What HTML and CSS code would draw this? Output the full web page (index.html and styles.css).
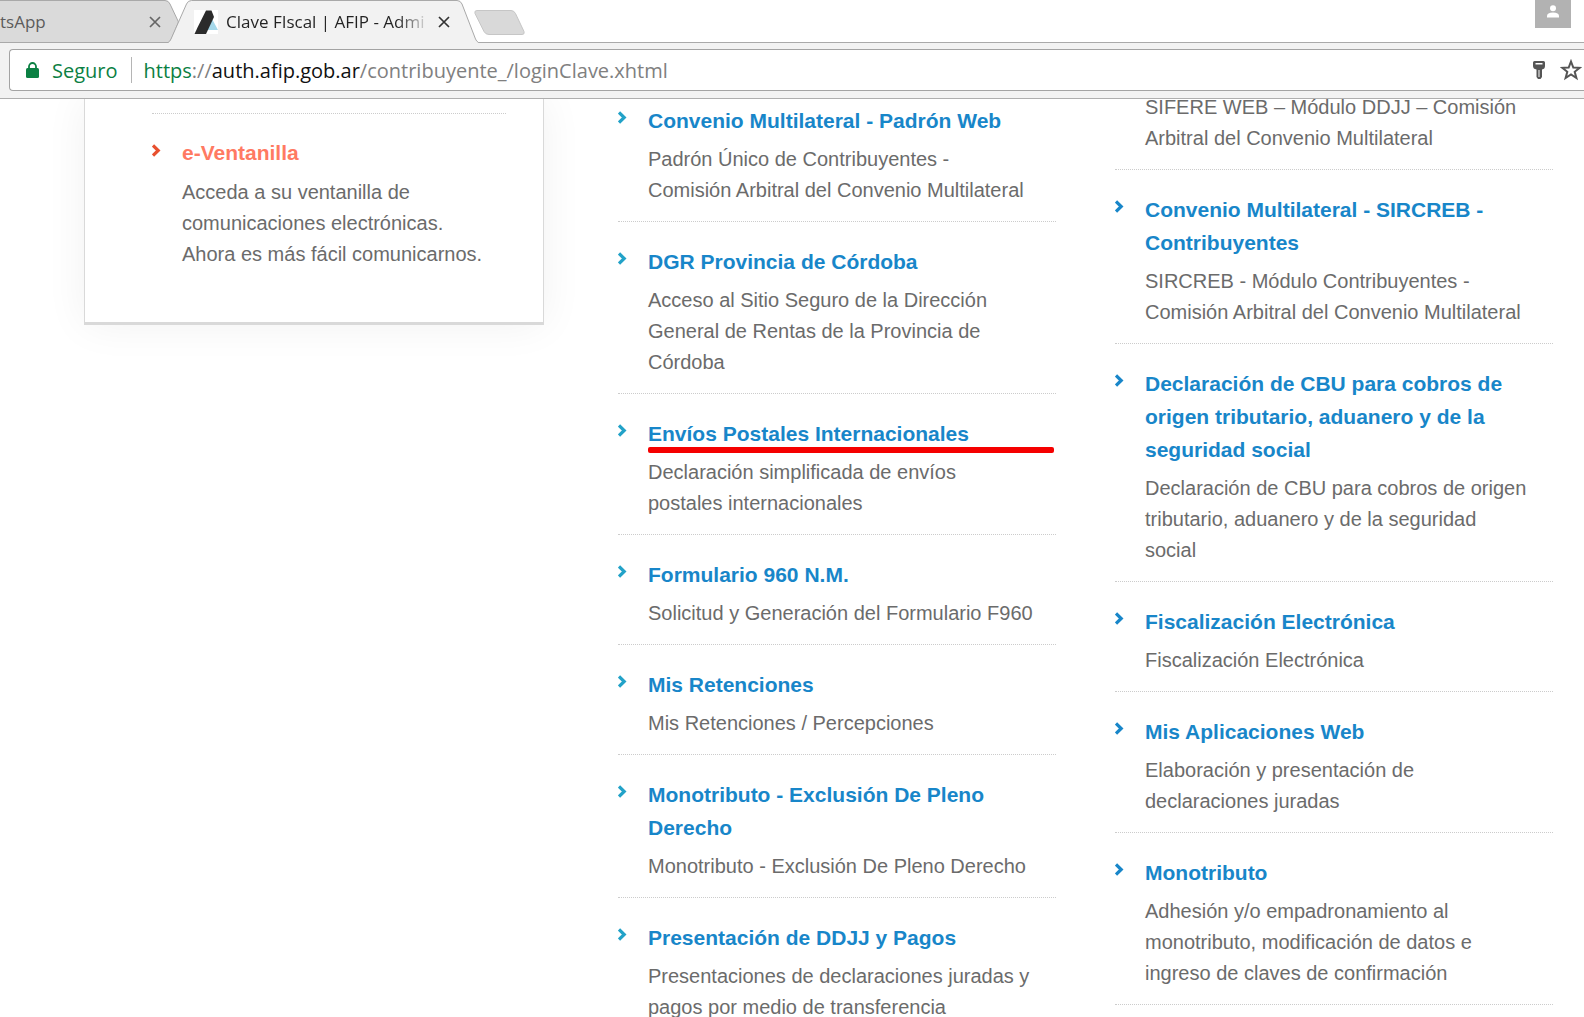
FILE: index.html
```html
<!DOCTYPE html>
<html lang="es">
<head>
<meta charset="utf-8">
<title>Clave FIscal | AFIP - Administración Federal</title>
<link rel="stylesheet" href="styles.css">
</head>
<body>
<svg class="defs" aria-hidden="true">
  <symbol id="chevron" viewBox="0 0 9 13"><path d="M1 1.500 6.200 6.500 1 11.500" fill="none" stroke="currentColor" stroke-width="3.200"/></symbol>
  <symbol id="close" viewBox="0 0 12 12"><path d="M1 1 11 11M11 1 1 11" fill="none" stroke="currentColor" stroke-width="1.700"/></symbol>
</svg>

<header class="browser">
  <div class="tabs">
    <svg class="tab-shapes" width="540" height="43" aria-hidden="true">
      <path d="M-1 .5H165Q168.500 .5 170 4L178.500 22 170 42.500H-1Z" fill="#dadada" stroke="#a9a9a9"/>
      <path d="M168 42.500Q169.500 41.500 170.500 39.500L186.500 4Q188 .5 191.500 .5H465Q468.500 .5 470 4L475.500 37Q476.500 41.500 479 42.500V44H168Z" fill="none"/>
      <path d="M168 42.500Q170 41.500 171 39L186.500 4Q188 .5 191.500 .5H457Q460.500 .5 462 4L475.500 39Q476.500 41.500 478.500 42.500V44H168Z" fill="#f2f2f2" stroke="#a9a9a9"/>
      <path d="M477 10.500H511Q514 10.500 515.500 13.500L524 31.500Q525 34.500 522 34.500H489Q485.500 34.500 484 31.500L475 13.500Q474 10.500 477 10.500Z" fill="#d9d9d9" stroke="#c6c6c6"/>
    </svg>
    <div class="tab tab-back"><span class="tab-title">tsApp</span><button class="close" aria-label="Cerrar WhatsApp"><svg width="12" height="12"><use href="#close"/></svg></button></div>
    <div class="tab tab-active">
      <svg width="24" height="24" aria-hidden="true"><path fill="#fff" d="M0 0h24v24H0z"/><path d="M17 7 24 20H13Z" fill="#a5d8ea"/><path d="M12 .5H17.500L20 7 12 24H0.500L3.500 17.500Z" fill="#2b2b2b"/></svg>
      <span class="tab-title fade">Clave FIscal | AFIP - Admi</span>
      <button class="close dark" aria-label="Cerrar pestaña"><svg width="12" height="12"><use href="#close"/></svg></button>
    </div>
    <button class="user" aria-label="Usuario"><svg width="12" height="13" viewBox="0 0 12 13"><circle cx="6" cy="3.200" r="3" fill="#fff"/><path d="M0 12.500V11Q0 7.500 6 7.500T12 11V12.500Z" fill="#fff"/></svg></button>
  </div>
  <div class="toolbar">
    <div class="address">
      <svg class="lock" width="13" height="17" aria-hidden="true"><rect y="6" width="13" height="10" rx="1.500" fill="#0b8043"/><path d="M3 7V4.500a3.500 3.500 0 0 1 7 0V7" fill="none" stroke="#0b8043" stroke-width="1.800"/></svg>
      <span class="secure">Seguro</span>
      <span class="url"><span class="scheme">https</span>://<span class="host">auth.afip.gob.ar</span>/contribuyente_/loginClave.xhtml</span>
      <button class="tool" aria-label="Contraseñas"><svg width="14" height="20" viewBox="0 0 14 20"><path fill-rule="evenodd" fill="#555" d="M2.500 1H11.500Q13 1 13 2.500V6Q13 9 10 9.500V17L8.500 19H6L4.500 17V9.500Q1 9 1 6V2.500Q1 1 2.500 1ZM3.500 3V4.500H10.500V3ZM6.500 10V17H7.500V10Z"/></svg></button>
      <button class="tool" aria-label="Agregar a favoritos"><svg width="22" height="22" viewBox="0 0 22 22"><path fill="none" stroke="#555" stroke-width="2" d="M11 2.500 13.300 8.500 19.700 8.800 14.700 12.800 16.400 19 11 15.500 5.600 19 7.300 12.800 2.300 8.800 8.700 8.500Z"/></svg></button>
    </div>
  </div>
</header>

<main class="page">
  <aside class="card">
    <article class="item item-alert">
      <svg class="chevron" width="9" height="13" aria-hidden="true"><use href="#chevron"/></svg>
      <h3><a href="#">e-Ventanilla</a></h3>
      <p>Acceda a su ventanilla de<br>comunicaciones electrónicas.<br>Ahora es más fácil comunicarnos.</p>
    </article>
  </aside>

  <div class="services">
    <section class="column">
      <article class="item">
        <svg class="chevron" width="9" height="13" aria-hidden="true"><use href="#chevron"/></svg>
        <h3><a href="#">Convenio Multilateral - Padrón Web</a></h3>
        <p>Padrón Único de Contribuyentes -<br>Comisión Arbitral del Convenio Multilateral</p>
      </article>
      <article class="item">
        <svg class="chevron" width="9" height="13" aria-hidden="true"><use href="#chevron"/></svg>
        <h3><a href="#">DGR Provincia de Córdoba</a></h3>
        <p>Acceso al Sitio Seguro de la Dirección<br>General de Rentas de la Provincia de<br>Córdoba</p>
      </article>
      <article class="item marked">
        <svg class="chevron" width="9" height="13" aria-hidden="true"><use href="#chevron"/></svg>
        <h3><a href="#">Envíos Postales Internacionales</a></h3>
        <p>Declaración simplificada de envíos<br>postales internacionales</p>
      </article>
      <article class="item">
        <svg class="chevron" width="9" height="13" aria-hidden="true"><use href="#chevron"/></svg>
        <h3><a href="#">Formulario 960 N.M.</a></h3>
        <p>Solicitud y Generación del Formulario F960</p>
      </article>
      <article class="item">
        <svg class="chevron" width="9" height="13" aria-hidden="true"><use href="#chevron"/></svg>
        <h3><a href="#">Mis Retenciones</a></h3>
        <p>Mis Retenciones / Percepciones</p>
      </article>
      <article class="item">
        <svg class="chevron" width="9" height="13" aria-hidden="true"><use href="#chevron"/></svg>
        <h3><a href="#">Monotributo - Exclusión De Pleno<br>Derecho</a></h3>
        <p>Monotributo - Exclusión De Pleno Derecho</p>
      </article>
      <article class="item">
        <svg class="chevron" width="9" height="13" aria-hidden="true"><use href="#chevron"/></svg>
        <h3><a href="#">Presentación de DDJJ y Pagos</a></h3>
        <p>Presentaciones de declaraciones juradas y<br>pagos por medio de transferencia</p>
      </article>
    </section>

    <section class="column column-right">
      <article class="item">
        <p>SIFERE WEB – Módulo DDJJ – Comisión<br>Arbitral del Convenio Multilateral</p>
      </article>
      <article class="item">
        <svg class="chevron" width="9" height="13" aria-hidden="true"><use href="#chevron"/></svg>
        <h3><a href="#">Convenio Multilateral - SIRCREB -<br>Contribuyentes</a></h3>
        <p>SIRCREB - Módulo Contribuyentes -<br>Comisión Arbitral del Convenio Multilateral</p>
      </article>
      <article class="item">
        <svg class="chevron" width="9" height="13" aria-hidden="true"><use href="#chevron"/></svg>
        <h3><a href="#">Declaración de CBU para cobros de<br>origen tributario, aduanero y de la<br>seguridad social</a></h3>
        <p>Declaración de CBU para cobros de origen<br>tributario, aduanero y de la seguridad<br>social</p>
      </article>
      <article class="item">
        <svg class="chevron" width="9" height="13" aria-hidden="true"><use href="#chevron"/></svg>
        <h3><a href="#">Fiscalización Electrónica</a></h3>
        <p>Fiscalización Electrónica</p>
      </article>
      <article class="item">
        <svg class="chevron" width="9" height="13" aria-hidden="true"><use href="#chevron"/></svg>
        <h3><a href="#">Mis Aplicaciones Web</a></h3>
        <p>Elaboración y presentación de<br>declaraciones juradas</p>
      </article>
      <article class="item">
        <svg class="chevron" width="9" height="13" aria-hidden="true"><use href="#chevron"/></svg>
        <h3><a href="#">Monotributo</a></h3>
        <p>Adhesión y/o empadronamiento al<br>monotributo, modificación de datos e<br>ingreso de claves de confirmación</p>
      </article>
    </section>
  </div>
</main>
</body>
</html>
```

FILE: styles.css
```css
* { box-sizing: border-box; }

body {
  display: flex;
  flex-direction: column;
  height: 100vh;
  margin: 0;
  overflow: hidden;
  background: #fff;
  color: #6b6b6b;
  font: 20px/31px "Liberation Sans", Arial, sans-serif;
}

svg { display: block; }
.defs { position: absolute; width: 0; height: 0; }

button {
  padding: 0;
  border: 0;
  background: none;
  color: inherit;
}

/* Browser frame */
.browser {
  flex: none;
  font-family: "Open Sans", "Noto Sans", sans-serif;
}

.tabs {
  position: relative;
  display: flex;
  height: 43px;
  border-bottom: 1px solid #a9a9a9;
}

.tab-shapes { position: absolute; left: 0; top: 0; }

.tab {
  position: relative;
  display: flex;
  align-items: center;
  height: 43px;
  font-size: 17px;
  line-height: 24px;
  white-space: nowrap;
}

.tab-back { width: 161px; color: #5c5c5c; }
.tab-active { width: 289px; padding-left: 33px; gap: 8px; color: #222; }
.tab-title { flex: 1; overflow: hidden; }

.fade {
  color: transparent;
  background: linear-gradient(90deg, #222 84%, transparent);
  background-clip: text;
}

.close { width: 12px; height: 12px; color: #666; }
.dark { color: #333; }

.user {
  display: flex;
  justify-content: center;
  width: 36px;
  height: 28px;
  margin: 0 13px 0 auto;
  padding-top: 5px;
  background: #b2b2b2;
}

.toolbar {
  height: 56px;
  padding: 6px 0 8px 9px;
  border-bottom: 1px solid #aeaeae;
  background: #f2f2f2;
}

.address {
  display: flex;
  align-items: center;
  height: 42px;
  padding: 0 2px 0 16px;
  border: 1px solid #a3a3a3;
  border-right: 0;
  border-radius: 4px 0 0 4px;
  background: #fff;
  font-size: 20px;
  line-height: 24px;
}

.secure, .url { padding-top: 2px; }

.secure {
  margin: 0 12px 0 13px;
  padding-right: 13px;
  border-right: 1px solid #b5b5b5;
  color: #0b8043;
}

.url { flex: 1; color: #808080; }
.scheme { color: #0b8043; }
.host { color: #111; }
.tool { margin-left: 14px; }

/* Services */
.page {
  flex: 1;
  display: grid;
  grid-template-columns: 460fr 935fr;
  column-gap: 74px;
  align-items: start;
  min-height: 0;
  padding: 0 31px 0 84px;
  overflow: hidden;
}

.services {
  display: grid;
  grid-template-columns: 1fr 1fr;
  column-gap: 59px;
  align-items: start;
}

.card {
  padding: 14px 37px 37px 67px;
  border: 1px solid #d9d9d9;
  border-top: 0;
  border-bottom-width: 3px;
  box-shadow: 0 0 40px rgba(0, 0, 0, .06);
}

.column { padding-top: 5px; }
.column-right { margin-top: -7px; padding-top: 0; }

.item {
  position: relative;
  padding: 23px 0 15px 30px;
  border-bottom: 1px dotted #ccc;
}

.column .item:first-child { padding-top: 0; }
.item h3 { margin: 0 0 7px; font-size: 21px; line-height: 33px; }
.item p { margin: 0; white-space: nowrap; }
.item a { color: #1886c9; text-decoration: none; }

.chevron { float: left; margin: 7px 0 0 -30px; color: #22a2c8; }
.column-right .chevron { color: #1886c9; }

.item-alert {
  padding-top: 22px;
  border-top: 1px dotted #ccc;
  border-bottom: 0;
}

.item-alert h3 { margin-bottom: 8px; }
.item-alert a { color: #ff7a62; }
.item-alert .chevron { margin-top: 8px; color: #e8502f; }

/* Hand-drawn highlight under a service title */
.marked h3::after {
  content: "";
  position: absolute;
  top: 53px;
  left: 30px;
  right: 2px;
  height: 6px;
  border-radius: 2px;
  background: #f50000;
}
```
